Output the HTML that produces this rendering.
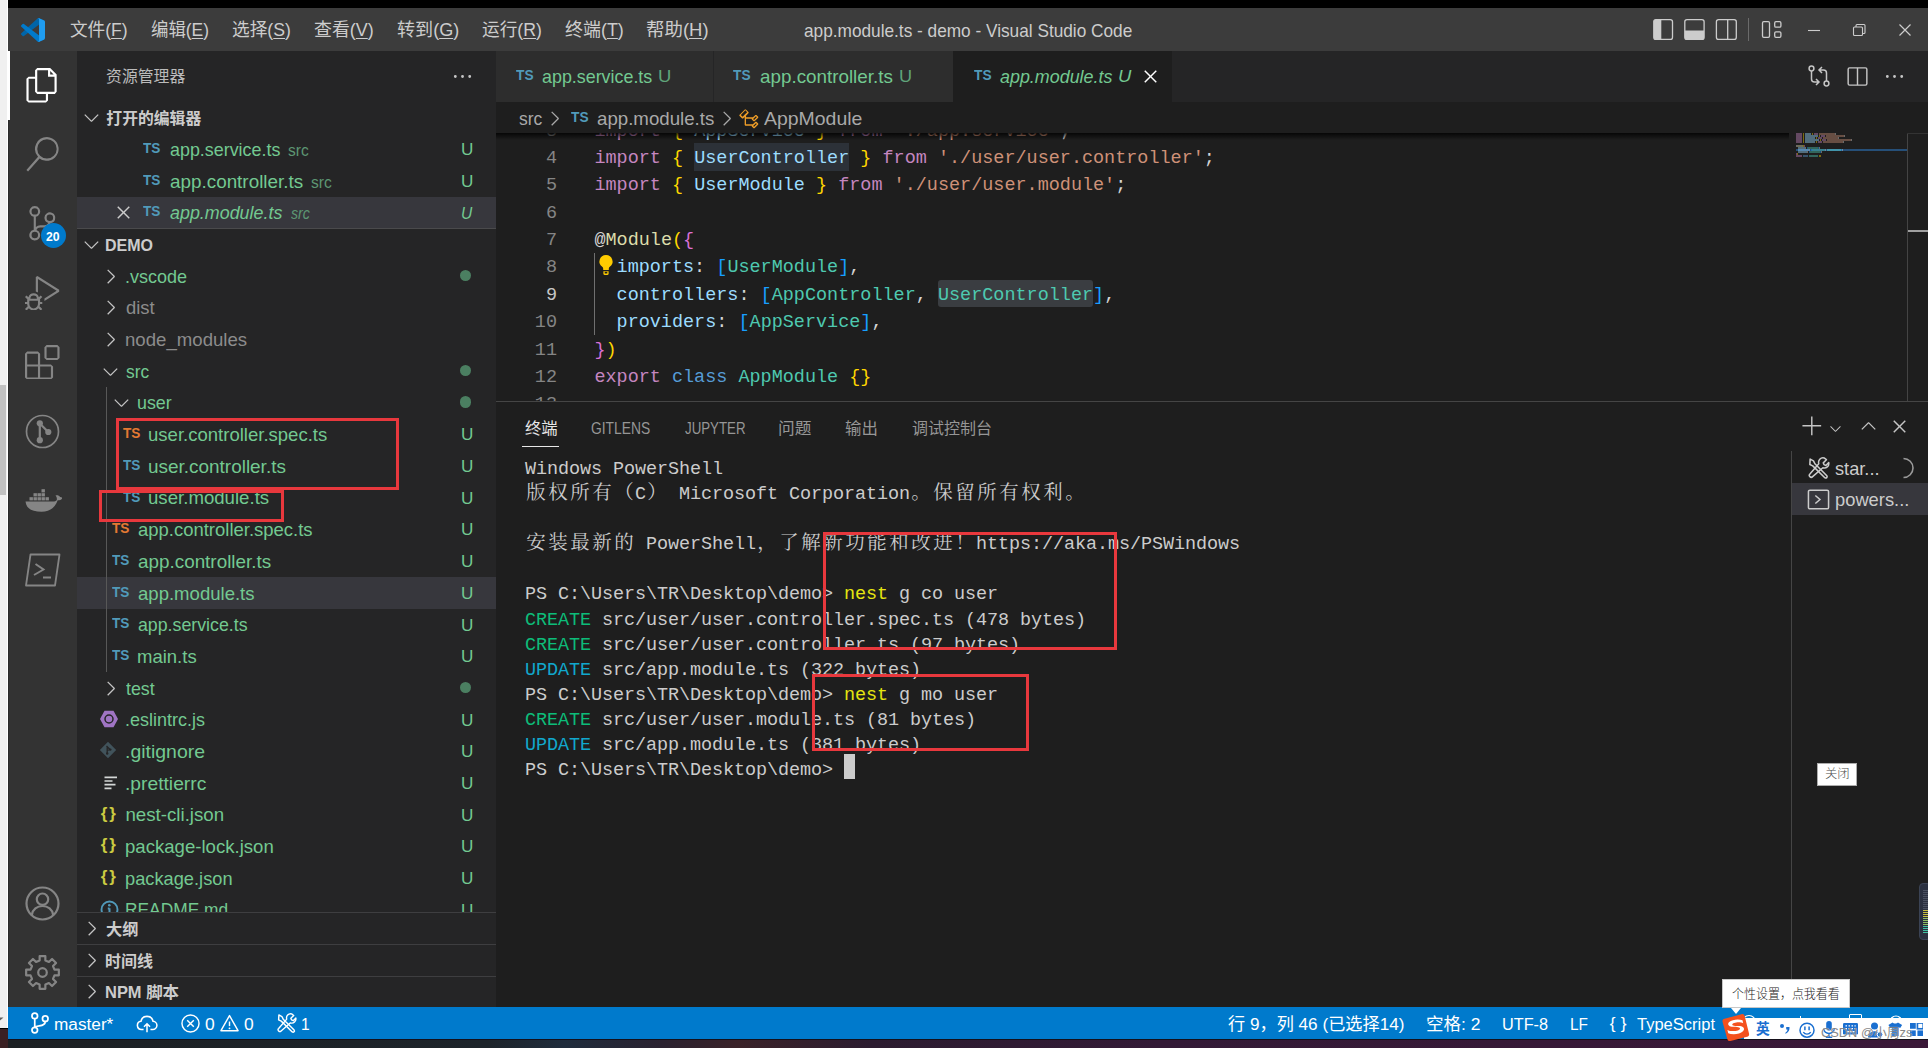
<!DOCTYPE html>
<html lang="zh-CN"><head><meta charset="utf-8"><title>app.module.ts - demo - Visual Studio Code</title>
<style>
html,body{margin:0;padding:0;width:1928px;height:1048px;overflow:hidden;background:#1e1e1e}
body{position:relative;font-family:"Liberation Sans","Noto Sans CJK SC",sans-serif;font-size:18.72px;color:#ccc;-webkit-font-smoothing:antialiased}
div,span,svg{position:absolute;box-sizing:border-box}
.t{white-space:pre;line-height:1;transform-origin:0 50%}
.t span,.t u,.t i,.t b{position:static}
.m{font-family:"Liberation Mono","Noto Serif CJK SC",monospace}
u{text-decoration:underline;text-underline-offset:2px}
</style></head>
<body>
<!-- p_title -->
<div style="left:0px;top:0px;width:8px;height:1048px;background:#f0f0f0;"></div>
<div style="left:0px;top:385px;width:6px;height:110px;background:#c1c1c1;"></div>
<div style="left:7px;top:0px;width:1px;height:1028px;background:#ffffff;"></div>
<div style="left:0px;top:1027.5px;width:8px;height:21px;background:#3a2023;"></div>
<div style="left:0px;top:1027.5px;width:8px;height:1px;background:#000000;"></div>
<svg style="left:0px;top:1016.5px;" width="4" height="4" viewBox="0 0 4 4"><path d="M0 .5h3.500L0 3.500z" fill="#606060"/></svg>
<div style="left:8px;top:0px;width:1920px;height:8px;background:#000;"></div>
<div style="left:8px;top:1039px;width:1920px;height:9px;background:linear-gradient(90deg,#1c2023 0%,#1d242a 25%,#1f2c3c 29%,#2a2230 34%,#3a2228 38%,#2c1c30 45%,#331a36 60%,#3a1838 100%);"></div>
<div style="left:8px;top:1039px;width:1920px;height:1px;background:#15101a;"></div>
<div style="left:8px;top:8px;width:1920px;height:43px;background:#3c3c3c;"></div>
<svg style="left:21px;top:17.5px;" width="24" height="24" viewBox="0 0 100 100"><path d="M96.5 10.8 75.9 0.9a6.2 6.2 0 0 0-7.1 1.2L1.4 63.6a4.2 4.2 0 0 0 0 6.2l5.5 5a4.2 4.2 0 0 0 5.3.2L93.4 13.4c2.7-2.1 6.6-.1 6.6 3.300v-.2a6.300 6.300 0 0 0-3.500-5.700z" fill="#0065a9"/><path d="M96.500 89.200 75.900 99.100a6.200 6.200 0 0 1-7.100-1.200L1.400 36.400a4.200 4.200 0 0 1 0-6.200l5.500-5a4.200 4.200 0 0 1 5.300-.2L93.400 86.600c2.700 2.100 6.600.1 6.600-3.300v.2a6.300 6.300 0 0 1-3.500 5.700z" fill="#007acc"/><path d="M75.900 99.100a6.200 6.200 0 0 1-7.100-1.200c2.300 2.300 6.200.700 6.200-2.600V4.700c0-3.300-3.900-4.900-6.200-2.600a6.200 6.200 0 0 1 7.100-1.200l20.600 9.900a6.200 6.200 0 0 1 3.500 5.600v67.200a6.200 6.200 0 0 1-3.500 5.600z" fill="#1f9cf0"/></svg>
<div class="t" style="left:70.0px;top:19.47px;height:22.46px;line-height:22.46px;font-size:18.72px;color:#cccccc;transform:scaleX(0.9417);">文件(<u>F</u>)</div>
<div class="t" style="left:151.0px;top:19.47px;height:22.46px;line-height:22.46px;font-size:18.72px;color:#cccccc;transform:scaleX(0.9306);">编辑(<u>E</u>)</div>
<div class="t" style="left:231.8px;top:19.47px;height:22.46px;line-height:22.46px;font-size:18.72px;color:#cccccc;transform:scaleX(0.9451);">选择(<u>S</u>)</div>
<div class="t" style="left:314.0px;top:19.47px;height:22.46px;line-height:22.46px;font-size:18.72px;color:#cccccc;transform:scaleX(0.958);">查看(<u>V</u>)</div>
<div class="t" style="left:396.8px;top:19.47px;height:22.46px;line-height:22.46px;font-size:18.72px;color:#cccccc;transform:scaleX(0.966);">转到(<u>G</u>)</div>
<div class="t" style="left:481.7px;top:19.47px;height:22.46px;line-height:22.46px;font-size:18.72px;color:#cccccc;transform:scaleX(0.9455);">运行(<u>R</u>)</div>
<div class="t" style="left:564.6px;top:19.47px;height:22.46px;line-height:22.46px;font-size:18.72px;color:#cccccc;transform:scaleX(0.9597);">终端(<u>T</u>)</div>
<div class="t" style="left:646.0px;top:19.47px;height:22.46px;line-height:22.46px;font-size:18.72px;color:#cccccc;transform:scaleX(0.9867);">帮助(<u>H</u>)</div>
<div class="t" style="left:803.5px;top:19.97px;height:22.46px;line-height:22.46px;font-size:18.72px;color:#cccccc;transform:scaleX(0.9214);">app.module.ts - demo - Visual Studio Code</div>
<svg style="left:0;top:0" width="1928" height="52" viewBox="0 0 1928 52"><rect x="1653.8" y="19.6" width="18.7" height="19.8" rx="2.200" fill="none" stroke="#cccccc" stroke-width="1.300"/><path d="M1653.800 21.200a1.600 1.600 0 0 1 1.600-1.600h5.900v19.800h-5.900a1.600 1.600 0 0 1-1.600-1.600z" fill="#cccccc"/><rect x="1684.8" y="19.6" width="19.3" height="19.8" rx="2.200" fill="none" stroke="#cccccc" stroke-width="1.300"/><path d="M1684.800 30.500h19.300v7.300a1.600 1.600 0 0 1-1.600 1.600h-16.100a1.600 1.600 0 0 1-1.600-1.600z" fill="#cccccc"/><rect x="1716.3999999999999" y="19.6" width="19.9" height="19.8" rx="2.200" fill="none" stroke="#cccccc" stroke-width="1.300"/><path d="M1727.700 19.500v20" stroke="#cccccc" stroke-width="1.300"/><rect x="1762.500" y="21.600" width="7" height="15.800" rx="1.300" fill="none" stroke="#cccccc" stroke-width="1.300"/><rect x="1774.700" y="21.600" width="6.200" height="5.600" rx="1.300" fill="none" stroke="#cccccc" stroke-width="1.300"/><rect x="1774.700" y="31.800" width="6.200" height="5.600" rx="1.300" fill="none" stroke="#cccccc" stroke-width="1.300"/></svg>
<div style="left:1748.3px;top:17.8px;width:1px;height:23.2px;background:#6b6b6b;"></div>
<svg style="left:1806px;top:23px;" width="16" height="16" viewBox="0 0 16 16"><path d="M2 7.500h12" stroke="#cccccc" stroke-width="1.100"/></svg>
<svg style="left:1851px;top:22px;" width="16" height="16" viewBox="0 0 16 16"><rect x="2.500" y="5" width="9" height="8.500" rx="1" fill="none" stroke="#cccccc" stroke-width="1.100"/><path d="M5 5V3.500a1 1 0 0 1 1-1h7a1 1 0 0 1 1 1v7a1 1 0 0 1-1 1h-1.500" fill="none" stroke="#cccccc" stroke-width="1.100"/></svg>
<svg style="left:1897px;top:22px;" width="16" height="16" viewBox="0 0 16 16"><path d="M2.500 2.500l11 11M13.500 2.500l-11 11" stroke="#cccccc" stroke-width="1.200"/></svg>
<!-- p_activity -->
<div style="left:8px;top:51px;width:69px;height:956px;background:#333333;"></div>
<div style="left:8px;top:51px;width:1px;height:956px;background:#2a2a2a;"></div>
<div style="left:8px;top:51px;width:2.3px;height:69px;background:#ffffff;"></div>
<svg style="left:25.22px;top:68.22px;" width="34.56" height="34.56" viewBox="0 0 24 24"><path d="M17.5 0h-9L7 1.5V6H2.5L1 7.5v15.07L2.5 24h12.07L16 22.570V18h4.700l1.300-1.430V4.500L17.500 0zm0 2.120l2.380 2.380H17.500V2.120zm-3 20.380h-12v-15H7v9.070L8.500 18h6v4.500zm6-6h-12v-15H16V6h4.500v10.500z" fill="#ffffff"/></svg>
<svg style="left:25.22px;top:137.32px;" width="34.56" height="34.56" viewBox="0 0 24 24"><path d="M15.250 0a8.250 8.250 0 0 0-6.180 13.720L1 22.880l1.120 1.120 8.050-9.120A8.251 8.251 0 1 0 15.250.010V0zm0 15a6.750 6.750 0 1 1 0-13.500 6.750 6.750 0 0 1 0 13.500z" fill="#858585"/></svg>
<svg style="left:25.22px;top:206.42px;" width="34.56" height="34.56" viewBox="0 0 24 24"><path d="M21.007 8.222A3.738 3.738 0 0 0 15.045 5.200a3.737 3.737 0 0 0 1.156 6.583 2.988 2.988 0 0 1-2.668 1.670h-2.990a4.456 4.456 0 0 0-2.989 1.165V7.400a3.737 3.737 0 1 0-1.494 0v9.117a3.776 3.776 0 1 0 1.816.099 2.990 2.990 0 0 1 2.668-1.667h2.990a4.484 4.484 0 0 0 4.223-3.039 3.736 3.736 0 0 0 3.250-3.687zM4.565 3.738a2.242 2.242 0 1 1 4.484 0 2.242 2.242 0 0 1-4.484 0zm4.484 16.441a2.242 2.242 0 1 1-4.484 0 2.242 2.242 0 0 1 4.484 0zm8.221-9.715a2.242 2.242 0 1 1 0-4.485 2.242 2.242 0 0 1 0 4.485z" fill="#858585"/></svg>
<div style="left:40.5px;top:223px;width:25px;height:25px;background:#007acc;border-radius:13px;"></div>
<div class="t" style="left:46.2px;top:228.5px;height:15.6px;line-height:15.6px;font-size:13px;color:#ffffff;font-weight:bold;transform:scaleX(0.9417);">20</div>
<svg style="left:25.22px;top:275.52px;" width="34.56" height="34.56" viewBox="0 0 24 24"><path d="M10.940 13.500l-1.320 1.320a3.730 3.730 0 0 0-7.240 0L1.060 13.500 0 14.560l1.720 1.720-.220.220V18H0v1.500h1.500v.080c.077.489.214.966.410 1.420L0 22.940 1.060 24l1.650-1.650A4.308 4.308 0 0 0 6 24a4.310 4.310 0 0 0 3.290-1.650L10.940 24 12 22.940 10.090 21c.198-.464.336-.951.410-1.450v-.100H12V18h-1.500v-1.500l-.220-.220L12 14.560l-1.060-1.060zM6 13.500a2.250 2.250 0 0 1 2.250 2.250h-4.500A2.250 2.250 0 0 1 6 13.500zm3 6a3.330 3.330 0 0 1-3 3 3.330 3.330 0 0 1-3-3v-2.250h6v2.250zm14.760-9.900v1.260L13.500 17.370V15.600l8.500-5.370L9 2v9.460a5.070 5.070 0 0 0-1.500-.720V.630L8.640 0l15.120 9.600z" fill="#858585"/></svg>
<svg style="left:25.22px;top:344.72px;" width="34.56" height="34.56" viewBox="0 0 24 24"><path d="M13.500 1.500L15 0h7.500L24 1.500V9l-1.500 1.500H15L13.500 9V1.500zm1.500 0V9h7.500V1.500H15zM0 15V6l1.500-1.500H9L10.500 6v7.500H18l1.500 1.500v7.500L18 24H1.500L0 22.500V15zm9-1.500V6H1.500v7.500H9zM9 15H1.500v7.500H9V15zm1.500 7.500H18V15h-7.500v7.500z" fill="#858585"/></svg>
<svg style="left:25px;top:414px;" width="35" height="35" viewBox="0 0 35 35"><circle cx="17.500" cy="17.500" r="16" fill="none" stroke="#858585" stroke-width="1.700"/><path d="M14.800 9.500V26M14.800 9.500L23 17.800" stroke="#858585" stroke-width="2.200" fill="none"/><circle cx="14.800" cy="9.300" r="3.100" fill="#858585"/><circle cx="23.300" cy="18" r="3.100" fill="#858585"/><circle cx="14.800" cy="26.200" r="3.100" fill="#858585"/></svg>
<svg style="left:24px;top:485.5px;" width="38" height="32" viewBox="0 0 38 32"><path d="M1.500 15.500h27.500c1.500 0 3-.6 3.800-1.600.3-1.800-.2-3.300-1.300-4.400 1.700-.6 3.600-.1 4.600 1.400 1.100.1 1.800.5 2.400 1.100-1 1.700-2.800 2.400-4.800 2.300C31.400 21.300 26 25.800 17.500 25.800 8 25.800 2.200 22.500 1.500 15.500z" fill="#858585"/><rect x="5.5" y="11.2" width="3.400" height="3.200" fill="#858585"/><rect x="9.5" y="11.2" width="3.400" height="3.200" fill="#858585"/><rect x="13.5" y="11.2" width="3.400" height="3.200" fill="#858585"/><rect x="17.5" y="11.2" width="3.400" height="3.200" fill="#858585"/><rect x="21.5" y="11.2" width="3.400" height="3.200" fill="#858585"/><rect x="9.5" y="7.2" width="3.400" height="3.200" fill="#858585"/><rect x="13.5" y="7.2" width="3.400" height="3.200" fill="#858585"/><rect x="17.5" y="7.2" width="3.400" height="3.200" fill="#858585"/><rect x="17.5" y="3.2" width="3.400" height="3.200" fill="#858585"/></svg>
<svg style="left:24px;top:552px;" width="38" height="36" viewBox="0 0 38 36"><path d="M6.500 2.500h29l-4.500 31h-29z" fill="none" stroke="#858585" stroke-width="1.800" stroke-linejoin="round"/><path d="M11.500 12l8 5.500-9.500 5.500M19 25.500h8" fill="none" stroke="#858585" stroke-width="2"/></svg>
<svg style="left:25px;top:885.5px;" width="35" height="35" viewBox="0 0 35 35"><circle cx="17.500" cy="17.500" r="16" fill="none" stroke="#858585" stroke-width="2.200"/><circle cx="17.500" cy="13.200" r="5.700" fill="none" stroke="#858585" stroke-width="2.200"/><path d="M6.800 29c.8-5.500 5.200-9 10.700-9s9.900 3.500 10.700 9" fill="none" stroke="#858585" stroke-width="2.200"/></svg>
<svg style="left:25px;top:954.5px;" width="35" height="35" viewBox="0 0 35 35"><path d="M14.65 1.15 L20.35 1.15 L20.37 5.54 L23.93 7.01 L27.05 3.92 L31.08 7.95 L27.99 11.07 L29.46 14.63 L33.85 14.65 L33.85 20.35 L29.46 20.37 L27.99 23.93 L31.08 27.05 L27.05 31.08 L23.93 27.99 L20.37 29.46 L20.35 33.85 L14.65 33.85 L14.63 29.46 L11.07 27.99 L7.95 31.08 L3.92 27.05 L7.01 23.93 L5.54 20.37 L1.15 20.35 L1.15 14.65 L5.54 14.63 L7.01 11.07 L3.92 7.95 L7.95 3.92 L11.07 7.01 L14.63 5.54Z" fill="none" stroke="#858585" stroke-width="2.200" stroke-linejoin="round"/><circle cx="17.500" cy="17.500" r="4.300" fill="none" stroke="#858585" stroke-width="2.200"/></svg>
<!-- p_sidebar -->
<div style="left:77px;top:51px;width:419px;height:956px;background:#252526;"></div>
<div class="t" style="left:106.1px;top:67.4px;height:19.01px;line-height:19.01px;font-size:15.84px;color:#bbbbbb;">资源管理器</div>
<svg style="left:451.48px;top:64.98px;" width="23.04" height="23.04" viewBox="0 0 16 16"><path d="M4 8a1 1 0 1 1-2 0 1 1 0 0 1 2 0zm5 0a1 1 0 1 1-2 0 1 1 0 0 1 2 0zm5 0a1 1 0 1 1-2 0 1 1 0 0 1 2 0z" fill="#c5c5c5"/></svg>
<svg style="left:80.18px;top:106.32px;" width="23.04" height="23.04" viewBox="0 0 16 16"><path d="M7.976 10.072l4.357-4.357.620.618L8.284 11h-.618L3 6.333l.619-.618 4.357 4.357z" fill="#c5c5c5"/></svg>
<div class="t" style="left:106.3px;top:109.34px;height:19.01px;line-height:19.01px;font-size:15.84px;color:#cccccc;font-weight:bold;">打开的编辑器</div>
<div class="t" style="left:143.0px;top:139.02px;height:18.0px;line-height:18.0px;font-size:15px;color:#519aba;font-weight:bold;transform:scaleX(0.908);">TS</div>
<div class="t" style="left:169.5px;top:138.99px;height:22.46px;line-height:22.46px;font-size:18.72px;color:#73c991;transform:scaleX(0.9562);">app.service.ts</div>
<div class="t" style="left:288.2px;top:140.91px;height:20.22px;line-height:20.22px;font-size:16.85px;color:#5d9673;transform:scaleX(0.9214);">src</div>
<div class="t" style="left:460.86px;top:140.32px;height:19.8px;line-height:19.8px;font-size:16.5px;color:#73c991;transform:scaleX(1.04);">U</div>
<div class="t" style="left:143.0px;top:170.7px;height:18.0px;line-height:18.0px;font-size:15px;color:#519aba;font-weight:bold;transform:scaleX(0.908);">TS</div>
<div class="t" style="left:169.5px;top:170.67px;height:22.46px;line-height:22.46px;font-size:18.72px;color:#73c991;transform:scaleX(1.0085);">app.controller.ts</div>
<div class="t" style="left:311.2px;top:172.59px;height:20.22px;line-height:20.22px;font-size:16.85px;color:#5d9673;transform:scaleX(0.926);">src</div>
<div class="t" style="left:460.86px;top:172.0px;height:19.8px;line-height:19.8px;font-size:16.5px;color:#73c991;transform:scaleX(1.04);">U</div>
<div style="left:77px;top:197.04px;width:419px;height:31.68px;background:#37373d;"></div>
<svg style="left:111.88px;top:201.36px;" width="23.04" height="23.04" viewBox="0 0 16 16"><path d="M8 8.707l3.646 3.647.708-.707L8.707 8l3.647-3.646-.707-.708L8 7.293 4.354 3.646l-.707.708L7.293 8l-3.646 3.646.707.708L8 8.707z" fill="#cccccc"/></svg>
<div class="t" style="left:143.0px;top:202.38px;height:18.0px;line-height:18.0px;font-size:15px;color:#519aba;font-weight:bold;transform:scaleX(0.908);">TS</div>
<div class="t" style="left:169.5px;top:202.35px;height:22.46px;line-height:22.46px;font-size:18.72px;color:#73c991;font-style:italic;transform:scaleX(0.9561);">app.module.ts</div>
<div class="t" style="left:290.6px;top:204.27px;height:20.22px;line-height:20.22px;font-size:16.85px;color:#5d9673;font-style:italic;transform:scaleX(0.8423);">src</div>
<div class="t" style="left:460.95px;top:203.68px;height:19.8px;line-height:19.8px;font-size:16.5px;color:#73c991;font-style:italic;transform:scaleX(0.9455);">U</div>
<div style="left:77px;top:228.2px;width:419px;height:1px;background:#4a4a4c;"></div>
<svg style="left:80.18px;top:233.04px;" width="23.04" height="23.04" viewBox="0 0 16 16"><path d="M7.976 10.072l4.357-4.357.620.618L8.284 11h-.618L3 6.333l.619-.618 4.357 4.357z" fill="#c5c5c5"/></svg>
<div class="t" style="left:105.29px;top:236.06px;height:19.01px;line-height:19.01px;font-size:15.84px;color:#cccccc;font-weight:bold;transform:scaleX(1.0114);">DEMO</div>
<div style="left:77px;top:260px;width:419px;height:652.6px;overflow:hidden;"><div style="left:-77px;top:-260px;width:1928px;height:1048px"><div style="left:77px;top:577.2px;width:419px;height:31.68px;background:#37373d;"></div><div style="left:106px;top:387px;width:1px;height:285px;background:#585858;"></div><svg style="left:98.68px;top:264.72px;" width="23.04" height="23.04" viewBox="0 0 16 16"><path d="M10.072 8.024L5.715 3.667l.618-.620L11 7.716v.618L6.333 13l-.618-.619 4.357-4.357z" fill="#c5c5c5"/></svg><div class="t" style="left:125.44px;top:265.71px;height:22.46px;line-height:22.46px;font-size:18.72px;color:#73c991;transform:scaleX(0.9642);">.vscode</div><div style="left:460px;top:269.74px;width:11.4px;height:11.4px;background:#4b7f61;border-radius:6px;"></div><svg style="left:98.68px;top:296.4px;" width="23.04" height="23.04" viewBox="0 0 16 16"><path d="M10.072 8.024L5.715 3.667l.618-.620L11 7.716v.618L6.333 13l-.618-.619 4.357-4.357z" fill="#c5c5c5"/></svg><div class="t" style="left:126.4px;top:297.39px;height:22.46px;line-height:22.46px;font-size:18.72px;color:#8c8c8c;transform:scaleX(0.9863);">dist</div><svg style="left:98.68px;top:328.08px;" width="23.04" height="23.04" viewBox="0 0 16 16"><path d="M10.072 8.024L5.715 3.667l.618-.620L11 7.716v.618L6.333 13l-.618-.619 4.357-4.357z" fill="#c5c5c5"/></svg><div class="t" style="left:125.4px;top:329.07px;height:22.46px;line-height:22.46px;font-size:18.72px;color:#8c8c8c;transform:scaleX(0.9955);">node_modules</div><svg style="left:98.68px;top:359.76px;" width="23.04" height="23.04" viewBox="0 0 16 16"><path d="M7.976 10.072l4.357-4.357.620.618L8.284 11h-.618L3 6.333l.619-.618 4.357 4.357z" fill="#c5c5c5"/></svg><div class="t" style="left:126.4px;top:360.75px;height:22.46px;line-height:22.46px;font-size:18.72px;color:#73c991;transform:scaleX(0.9276);">src</div><div style="left:460px;top:364.78px;width:11.4px;height:11.4px;background:#4b7f61;border-radius:6px;"></div><svg style="left:110.28px;top:391.44px;" width="23.04" height="23.04" viewBox="0 0 16 16"><path d="M7.976 10.072l4.357-4.357.620.618L8.284 11h-.618L3 6.333l.619-.618 4.357 4.357z" fill="#c5c5c5"/></svg><div class="t" style="left:137.05px;top:392.43px;height:22.46px;line-height:22.46px;font-size:18.72px;color:#73c991;transform:scaleX(0.9529);">user</div><div style="left:460px;top:396.46px;width:11.4px;height:11.4px;background:#4b7f61;border-radius:6px;"></div><div class="t" style="left:123.1px;top:424.14px;height:18.0px;line-height:18.0px;font-size:15px;color:#e37933;font-weight:bold;transform:scaleX(0.908);">TS</div><div class="t" style="left:148.21px;top:424.11px;height:22.46px;line-height:22.46px;font-size:18.72px;color:#73c991;transform:scaleX(0.9909);">user.controller.spec.ts</div><div class="t" style="left:460.86px;top:425.44px;height:19.8px;line-height:19.8px;font-size:16.5px;color:#73c991;transform:scaleX(1.04);">U</div><div class="t" style="left:123.1px;top:455.82px;height:18.0px;line-height:18.0px;font-size:15px;color:#519aba;font-weight:bold;transform:scaleX(0.908);">TS</div><div class="t" style="left:148.19px;top:455.79px;height:22.46px;line-height:22.46px;font-size:18.72px;color:#73c991;transform:scaleX(1.0124);">user.controller.ts</div><div class="t" style="left:460.86px;top:457.12px;height:19.8px;line-height:19.8px;font-size:16.5px;color:#73c991;transform:scaleX(1.04);">U</div><div class="t" style="left:123.1px;top:487.5px;height:18.0px;line-height:18.0px;font-size:15px;color:#519aba;font-weight:bold;transform:scaleX(0.908);">TS</div><div class="t" style="left:148.2px;top:487.47px;height:22.46px;line-height:22.46px;font-size:18.72px;color:#73c991;transform:scaleX(0.996);">user.module.ts</div><div class="t" style="left:460.86px;top:488.8px;height:19.8px;line-height:19.8px;font-size:16.5px;color:#73c991;transform:scaleX(1.04);">U</div><div class="t" style="left:111.5px;top:519.18px;height:18.0px;line-height:18.0px;font-size:15px;color:#e37933;font-weight:bold;transform:scaleX(0.908);">TS</div><div class="t" style="left:138.0px;top:519.15px;height:22.46px;line-height:22.46px;font-size:18.72px;color:#73c991;transform:scaleX(0.9876);">app.controller.spec.ts</div><div class="t" style="left:460.86px;top:520.48px;height:19.8px;line-height:19.8px;font-size:16.5px;color:#73c991;transform:scaleX(1.04);">U</div><div class="t" style="left:111.5px;top:550.86px;height:18.0px;line-height:18.0px;font-size:15px;color:#519aba;font-weight:bold;transform:scaleX(0.908);">TS</div><div class="t" style="left:138.0px;top:550.83px;height:22.46px;line-height:22.46px;font-size:18.72px;color:#73c991;transform:scaleX(1.0085);">app.controller.ts</div><div class="t" style="left:460.86px;top:552.16px;height:19.8px;line-height:19.8px;font-size:16.5px;color:#73c991;transform:scaleX(1.04);">U</div><div class="t" style="left:111.5px;top:582.54px;height:18.0px;line-height:18.0px;font-size:15px;color:#519aba;font-weight:bold;transform:scaleX(0.908);">TS</div><div class="t" style="left:138.0px;top:582.51px;height:22.46px;line-height:22.46px;font-size:18.72px;color:#73c991;transform:scaleX(0.992);">app.module.ts</div><div class="t" style="left:460.86px;top:583.84px;height:19.8px;line-height:19.8px;font-size:16.5px;color:#73c991;transform:scaleX(1.04);">U</div><div class="t" style="left:111.5px;top:614.22px;height:18.0px;line-height:18.0px;font-size:15px;color:#519aba;font-weight:bold;transform:scaleX(0.908);">TS</div><div class="t" style="left:138.0px;top:614.19px;height:22.46px;line-height:22.46px;font-size:18.72px;color:#73c991;transform:scaleX(0.9493);">app.service.ts</div><div class="t" style="left:460.86px;top:615.52px;height:19.8px;line-height:19.8px;font-size:16.5px;color:#73c991;transform:scaleX(1.04);">U</div><div class="t" style="left:111.5px;top:645.9px;height:18.0px;line-height:18.0px;font-size:15px;color:#519aba;font-weight:bold;transform:scaleX(0.908);">TS</div><div class="t" style="left:137.01px;top:645.87px;height:22.46px;line-height:22.46px;font-size:18.72px;color:#73c991;transform:scaleX(0.9893);">main.ts</div><div class="t" style="left:460.86px;top:647.2px;height:19.8px;line-height:19.8px;font-size:16.5px;color:#73c991;transform:scaleX(1.04);">U</div><svg style="left:98.68px;top:676.56px;" width="23.04" height="23.04" viewBox="0 0 16 16"><path d="M10.072 8.024L5.715 3.667l.618-.620L11 7.716v.618L6.333 13l-.618-.619 4.357-4.357z" fill="#c5c5c5"/></svg><div class="t" style="left:126.4px;top:677.55px;height:22.46px;line-height:22.46px;font-size:18.72px;color:#73c991;transform:scaleX(0.9532);">test</div><div style="left:460px;top:681.58px;width:11.4px;height:11.4px;background:#4b7f61;border-radius:6px;"></div><svg style="left:98.6px;top:709.26px;" width="20" height="20" viewBox="0 0 20 20"><path d="M5.500 1.800h9L19 10l-4.500 8.200h-9L1 10z" fill="#a074c4"/><circle cx="10" cy="10" r="4" fill="#a074c4" stroke="#252526" stroke-width="1.500"/></svg><div class="t" style="left:125.44px;top:709.23px;height:22.46px;line-height:22.46px;font-size:18.72px;color:#73c991;transform:scaleX(0.961);">.eslintrc.js</div><div class="t" style="left:460.86px;top:710.56px;height:19.8px;line-height:19.8px;font-size:16.5px;color:#73c991;transform:scaleX(1.04);">U</div><svg style="left:99px;top:741.44px;" width="18" height="18" viewBox="0 0 18 18"><path d="M9 .8 17.200 9 9 17.200.8 9z" fill="#41535b"/><path d="M7.500 5l3.500 3.500M8.200 6v7M8.200 9.500l3-1" stroke="#252526" stroke-width="1.300" fill="none"/><circle cx="8.200" cy="12.500" r="1.200" fill="#252526"/><circle cx="11.300" cy="8.600" r="1.200" fill="#252526"/></svg><div class="t" style="left:125.36px;top:740.91px;height:22.46px;line-height:22.46px;font-size:18.72px;color:#73c991;transform:scaleX(1.0405);">.gitignore</div><div class="t" style="left:460.86px;top:742.24px;height:19.8px;line-height:19.8px;font-size:16.5px;color:#73c991;transform:scaleX(1.04);">U</div><svg style="left:104px;top:775.62px;" width="14" height="14" viewBox="0 0 14 14"><path d="M.5 1.300h12.500M.5 5h8M.5 8.700h11M.5 12.400h7" stroke="#d4d7d6" stroke-width="1.700" fill="none"/></svg><div class="t" style="left:125.37px;top:772.59px;height:22.46px;line-height:22.46px;font-size:18.72px;color:#73c991;transform:scaleX(1.0292);">.prettierrc</div><div class="t" style="left:460.86px;top:773.92px;height:19.8px;line-height:19.8px;font-size:16.5px;color:#73c991;transform:scaleX(1.04);">U</div><div class="t" style="left:100.8px;top:803.8px;height:20.4px;line-height:20.4px;font-size:17px;color:#cbcb41;font-weight:bold;letter-spacing:1.784px;">{}</div><div class="t" style="left:125.4px;top:804.27px;height:22.46px;line-height:22.46px;font-size:18.72px;color:#73c991;">nest-cli.json</div><div class="t" style="left:460.86px;top:805.6px;height:19.8px;line-height:19.8px;font-size:16.5px;color:#73c991;transform:scaleX(1.04);">U</div><div class="t" style="left:100.8px;top:835.48px;height:20.4px;line-height:20.4px;font-size:17px;color:#cbcb41;font-weight:bold;letter-spacing:1.784px;">{}</div><div class="t" style="left:125.41px;top:835.95px;height:22.46px;line-height:22.46px;font-size:18.72px;color:#73c991;transform:scaleX(0.9939);">package-lock.json</div><div class="t" style="left:460.86px;top:837.28px;height:19.8px;line-height:19.8px;font-size:16.5px;color:#73c991;transform:scaleX(1.04);">U</div><div class="t" style="left:100.8px;top:867.16px;height:20.4px;line-height:20.4px;font-size:17px;color:#cbcb41;font-weight:bold;letter-spacing:1.784px;">{}</div><div class="t" style="left:125.42px;top:867.63px;height:22.46px;line-height:22.46px;font-size:18.72px;color:#73c991;transform:scaleX(0.976);">package.json</div><div class="t" style="left:460.86px;top:868.96px;height:19.8px;line-height:19.8px;font-size:16.5px;color:#73c991;transform:scaleX(1.04);">U</div><svg style="left:99.5px;top:900.34px;" width="19" height="19" viewBox="0 0 19 19"><circle cx="9.500" cy="9.500" r="8" fill="none" stroke="#519aba" stroke-width="1.900"/><path d="M9.500 8.300v5.500M7.800 8.600h1.700M7.500 13.800h4" stroke="#519aba" stroke-width="2"/><circle cx="9.300" cy="5.300" r="1.300" fill="#519aba"/></svg><div class="t" style="left:125.47px;top:899.31px;height:22.46px;line-height:22.46px;font-size:18.72px;color:#73c991;transform:scaleX(0.9272);">README.md</div><div class="t" style="left:460.86px;top:900.64px;height:19.8px;line-height:19.8px;font-size:16.5px;color:#73c991;transform:scaleX(1.04);">U</div></div></div>
<div style="left:77px;top:911.9px;width:419px;height:1.6px;background:#3e3e40;"></div>
<svg style="left:80.48px;top:917.38px;" width="23.04" height="23.04" viewBox="0 0 16 16"><path d="M10.072 8.024L5.715 3.667l.618-.620L11 7.716v.618L6.333 13l-.618-.619 4.357-4.357z" fill="#c5c5c5"/></svg>
<div class="t" style="left:105.8px;top:920.4px;height:19.01px;line-height:19.01px;font-size:15.84px;color:#cccccc;font-weight:bold;transform:scaleX(1.025);">大纲</div>
<div style="left:77px;top:943.9px;width:419px;height:1.6px;background:#3e3e40;"></div>
<svg style="left:80.48px;top:948.88px;" width="23.04" height="23.04" viewBox="0 0 16 16"><path d="M10.072 8.024L5.715 3.667l.618-.620L11 7.716v.618L6.333 13l-.618-.619 4.357-4.357z" fill="#c5c5c5"/></svg>
<div class="t" style="left:104.79px;top:951.9px;height:19.01px;line-height:19.01px;font-size:15.84px;color:#cccccc;font-weight:bold;transform:scaleX(1.0117);">时间线</div>
<div style="left:77px;top:975.9px;width:419px;height:1.6px;background:#3e3e40;"></div>
<svg style="left:80.48px;top:980.38px;" width="23.04" height="23.04" viewBox="0 0 16 16"><path d="M10.072 8.024L5.715 3.667l.618-.620L11 7.716v.618L6.333 13l-.618-.619 4.357-4.357z" fill="#c5c5c5"/></svg>
<div class="t" style="left:104.76px;top:983.4px;height:19.01px;line-height:19.01px;font-size:15.84px;color:#cccccc;font-weight:bold;transform:scaleX(1.0398);">NPM 脚本</div>
<!-- p_editor -->
<div style="left:496px;top:51px;width:1432px;height:51px;background:#252526;"></div>
<div style="left:496px;top:51px;width:216.5px;height:51px;background:#2d2d2d;"></div>
<div style="left:713.5px;top:51px;width:239px;height:51px;background:#2d2d2d;"></div>
<div style="left:952.5px;top:51px;width:219px;height:51px;background:#1e1e1e;"></div>
<div class="t" style="left:516.0px;top:67.4px;height:16.8px;line-height:16.8px;font-size:14px;color:#519aba;font-weight:bold;transform:scaleX(0.98);">TS</div>
<div class="t" style="left:542.4px;top:65.77px;height:22.46px;line-height:22.46px;font-size:18.72px;color:#73c991;transform:scaleX(0.9554);">app.service.ts</div>
<div class="t" style="left:658.48px;top:67.4px;height:19.8px;line-height:19.8px;font-size:16.5px;color:#5fa47a;transform:scaleX(1.12);">U</div>
<div class="t" style="left:733.3px;top:67.4px;height:16.8px;line-height:16.8px;font-size:14px;color:#519aba;font-weight:bold;transform:scaleX(0.98);">TS</div>
<div class="t" style="left:759.6px;top:65.77px;height:22.46px;line-height:22.46px;font-size:18.72px;color:#73c991;transform:scaleX(1.0062);">app.controller.ts</div>
<div class="t" style="left:899.4px;top:67.4px;height:19.8px;line-height:19.8px;font-size:16.5px;color:#5fa47a;transform:scaleX(1.1);">U</div>
<div class="t" style="left:973.5px;top:67.4px;height:16.8px;line-height:16.8px;font-size:14px;color:#519aba;font-weight:bold;transform:scaleX(0.98);">TS</div>
<div class="t" style="left:999.8px;top:65.77px;height:22.46px;line-height:22.46px;font-size:18.72px;color:#73c991;font-style:italic;transform:scaleX(0.957);">app.module.ts</div>
<div class="t" style="left:1118.48px;top:67.4px;height:19.8px;line-height:19.8px;font-size:16.5px;color:#73c991;font-style:italic;transform:scaleX(1.12);">U</div>
<svg style="left:1139.48px;top:64.98px;" width="23.04" height="23.04" viewBox="0 0 16 16"><path d="M8 8.707l3.646 3.647.708-.707L8.707 8l3.647-3.646-.707-.708L8 7.293 4.354 3.646l-.707.708L7.293 8l-3.646 3.646.707.708L8 8.707z" fill="#ffffff"/></svg>
<svg style="left:1807px;top:64px;" width="24" height="24" viewBox="0 0 16 16"><circle cx="3" cy="3" r="1.600" fill="none" stroke="#c5c5c5" stroke-width="1"/><circle cx="13" cy="13" r="1.600" fill="none" stroke="#c5c5c5" stroke-width="1"/><path d="M3 4.600V10a2 2 0 0 0 2 2h2.500M6 10l2 2-2 2M13 11.400V6a2 2 0 0 0-2-2H8.500M10 2L8 4l2 2" fill="none" stroke="#c5c5c5" stroke-width="1"/></svg>
<svg style="left:1846px;top:65px;" width="23" height="23" viewBox="0 0 16 16"><rect x="1.500" y="2" width="13" height="12" rx="1" fill="none" stroke="#c5c5c5" stroke-width="1"/><path d="M8 2v12" stroke="#c5c5c5" stroke-width="1"/></svg>
<svg style="left:1882.98px;top:65.28px;" width="23.04" height="23.04" viewBox="0 0 16 16"><path d="M4 8a1 1 0 1 1-2 0 1 1 0 0 1 2 0zm5 0a1 1 0 1 1-2 0 1 1 0 0 1 2 0zm5 0a1 1 0 1 1-2 0 1 1 0 0 1 2 0z" fill="#c5c5c5"/></svg>
<div class="t" style="left:518.6px;top:107.77px;height:22.46px;line-height:22.46px;font-size:18.72px;color:#a9a9a9;transform:scaleX(0.9357);">src</div>
<svg style="left:542.98px;top:107.28px;" width="23.04" height="23.04" viewBox="0 0 16 16"><path d="M10.072 8.024L5.715 3.667l.618-.620L11 7.716v.618L6.333 13l-.618-.619 4.357-4.357z" fill="#a9a9a9"/></svg>
<div class="t" style="left:570.8px;top:109.4px;height:16.8px;line-height:16.8px;font-size:14px;color:#519aba;font-weight:bold;transform:scaleX(0.98);">TS</div>
<div class="t" style="left:597.1px;top:107.77px;height:22.46px;line-height:22.46px;font-size:18.72px;color:#a9a9a9;transform:scaleX(0.998);">app.module.ts</div>
<svg style="left:714.98px;top:107.28px;" width="23.04" height="23.04" viewBox="0 0 16 16"><path d="M10.072 8.024L5.715 3.667l.618-.620L11 7.716v.618L6.333 13l-.618-.619 4.357-4.357z" fill="#a9a9a9"/></svg>
<svg style="left:738px;top:107.5px;" width="22" height="22" viewBox="0 0 16 16"><path d="M11.340 9.710h.710l2.670-2.670v-.710L13.380 5h-.700l-1.820 1.810h-5V5.560l1.860-1.850V3l-2-2H5L1 5v.710l2 2h.710l1.140-1.150v5.790l.500.500H10v.520l1.330 1.340h.710l2.670-2.670v-.710L13.370 10h-.700l-1.860 1.850h-5v-4H10v.480l1.340 1.380zm1.690-3.650l.630.630-2 2-.630-.630 2-2zm-8.960-.460L3.350 6.310l-1.290-1.300 3.290-3.300 1.300 1.300-1.760 1.770-.820.820zm8.960 5.460l.630.630-2 2-.630-.630 2-2z" fill="#ee9d28"/></svg>
<div class="t" style="left:764.3px;top:107.77px;height:22.46px;line-height:22.46px;font-size:18.72px;color:#a9a9a9;transform:scaleX(1.0391);">AppModule</div>
<div style="left:496px;top:133px;width:1300px;height:268px;overflow:hidden;"><div style="left:-496px;top:-133px;width:1928px;height:1048px"><div style="left:694.12px;top:143.32px;width:155.12px;height:27.36px;background:#2c3138;"></div><div style="left:937.88px;top:280.12px;width:155.12px;height:27.36px;background:#3a3d41;border-radius:3px;"></div><div style="left:594px;top:252.76px;width:1.3px;height:82.08px;background:#707070;"></div><div class="t m" style="left:545.92px;top:120.66px;height:22.16px;line-height:22.16px;font-size:18.47px;color:#858585;letter-spacing:0.006px;">3</div><div class="t m" style="left:594.4px;top:120.66px;height:22.16px;line-height:22.16px;font-size:18.47px;color:#d4d4d4;letter-spacing:0.006px;"><span style="color:#c586c0">import</span><span style="color:#d4d4d4"> </span><span style="color:#ffd700">{</span><span style="color:#9cdcfe"> AppService </span><span style="color:#ffd700">}</span><span style="color:#c586c0"> from</span><span style="color:#ce9178"> './app.service'</span><span style="color:#d4d4d4">;</span></div><div class="t m" style="left:545.92px;top:148.02px;height:22.16px;line-height:22.16px;font-size:18.47px;color:#858585;letter-spacing:0.006px;">4</div><div class="t m" style="left:594.4px;top:148.02px;height:22.16px;line-height:22.16px;font-size:18.47px;color:#d4d4d4;letter-spacing:0.006px;"><span style="color:#c586c0">import</span><span style="color:#d4d4d4"> </span><span style="color:#ffd700">{</span><span style="color:#9cdcfe"> UserController </span><span style="color:#ffd700">}</span><span style="color:#c586c0"> from</span><span style="color:#ce9178"> './user/user.controller'</span><span style="color:#d4d4d4">;</span></div><div class="t m" style="left:545.92px;top:175.38px;height:22.16px;line-height:22.16px;font-size:18.47px;color:#858585;letter-spacing:0.006px;">5</div><div class="t m" style="left:594.4px;top:175.38px;height:22.16px;line-height:22.16px;font-size:18.47px;color:#d4d4d4;letter-spacing:0.006px;"><span style="color:#c586c0">import</span><span style="color:#d4d4d4"> </span><span style="color:#ffd700">{</span><span style="color:#9cdcfe"> UserModule </span><span style="color:#ffd700">}</span><span style="color:#c586c0"> from</span><span style="color:#ce9178"> './user/user.module'</span><span style="color:#d4d4d4">;</span></div><div class="t m" style="left:545.92px;top:202.74px;height:22.16px;line-height:22.16px;font-size:18.47px;color:#858585;letter-spacing:0.006px;">6</div><div class="t m" style="left:545.92px;top:230.1px;height:22.16px;line-height:22.16px;font-size:18.47px;color:#858585;letter-spacing:0.006px;">7</div><div class="t m" style="left:594.4px;top:230.1px;height:22.16px;line-height:22.16px;font-size:18.47px;color:#d4d4d4;letter-spacing:0.006px;"><span style="color:#d4d4d4">@</span><span style="color:#dcdcaa">Module</span><span style="color:#ffd700">(</span><span style="color:#da70d6">{</span></div><div class="t m" style="left:545.92px;top:257.46px;height:22.16px;line-height:22.16px;font-size:18.47px;color:#858585;letter-spacing:0.006px;">8</div><div class="t m" style="left:594.4px;top:257.46px;height:22.16px;line-height:22.16px;font-size:18.47px;color:#d4d4d4;letter-spacing:0.006px;"><span style="color:#9cdcfe">  imports</span><span style="color:#d4d4d4">: </span><span style="color:#179fff">[</span><span style="color:#4ec9b0">UserModule</span><span style="color:#179fff">]</span><span style="color:#d4d4d4">,</span></div><div class="t m" style="left:545.92px;top:284.82px;height:22.16px;line-height:22.16px;font-size:18.47px;color:#c6c6c6;letter-spacing:0.006px;">9</div><div class="t m" style="left:594.4px;top:284.82px;height:22.16px;line-height:22.16px;font-size:18.47px;color:#d4d4d4;letter-spacing:0.006px;"><span style="color:#9cdcfe">  controllers</span><span style="color:#d4d4d4">: </span><span style="color:#179fff">[</span><span style="color:#4ec9b0">AppController</span><span style="color:#d4d4d4">, </span><span style="color:#4ec9b0">UserController</span><span style="color:#179fff">]</span><span style="color:#d4d4d4">,</span></div><div class="t m" style="left:534.84px;top:312.18px;height:22.16px;line-height:22.16px;font-size:18.47px;color:#858585;letter-spacing:0.006px;">10</div><div class="t m" style="left:594.4px;top:312.18px;height:22.16px;line-height:22.16px;font-size:18.47px;color:#d4d4d4;letter-spacing:0.006px;"><span style="color:#9cdcfe">  providers</span><span style="color:#d4d4d4">: </span><span style="color:#179fff">[</span><span style="color:#4ec9b0">AppService</span><span style="color:#179fff">]</span><span style="color:#d4d4d4">,</span></div><div class="t m" style="left:534.84px;top:339.54px;height:22.16px;line-height:22.16px;font-size:18.47px;color:#858585;letter-spacing:0.006px;">11</div><div class="t m" style="left:594.4px;top:339.54px;height:22.16px;line-height:22.16px;font-size:18.47px;color:#d4d4d4;letter-spacing:0.006px;"><span style="color:#da70d6">}</span><span style="color:#ffd700">)</span></div><div class="t m" style="left:534.84px;top:366.9px;height:22.16px;line-height:22.16px;font-size:18.47px;color:#858585;letter-spacing:0.006px;">12</div><div class="t m" style="left:594.4px;top:366.9px;height:22.16px;line-height:22.16px;font-size:18.47px;color:#d4d4d4;letter-spacing:0.006px;"><span style="color:#c586c0">export</span><span style="color:#569cd6"> class</span><span style="color:#4ec9b0"> AppModule </span><span style="color:#ffd700">{}</span></div><div class="t m" style="left:534.84px;top:394.26px;height:22.16px;line-height:22.16px;font-size:18.47px;color:#858585;letter-spacing:0.006px;">13</div><svg style="left:597.5px;top:253.5px;" width="16" height="22" viewBox="0 0 16 22"><path d="M8 1a6.500 6.500 0 0 0-3.800 11.800c.600.500 1 1.100 1 1.900V16h5.600v-1.300c0-.8.400-1.400 1-1.900A6.500 6.500 0 0 0 8 1z" fill="#ffcc00"/><path d="M5.400 17.200h5.200v2.300a1.500 1.500 0 0 1-1.500 1.500H6.900a1.500 1.500 0 0 1-1.500-1.500z" fill="#ffcc00"/><rect x="6.700" y="17.800" width="2.600" height="1.700" fill="#1e1e1e"/></svg></div></div>
<div style="left:496px;top:133px;width:1293px;height:7px;background:linear-gradient(#000000cc,#00000000);"></div>
<div style="left:1796px;top:149px;width:111px;height:2px;background:#264f78;"></div>
<div style="left:1827px;top:149px;width:14px;height:2px;background:#3a6ea5;"></div>
<div style="left:1796px;top:133.2px;width:6px;height:1.6px;background:#c586c0;opacity:.42;"></div>
<div style="left:1803px;top:133.2px;width:1px;height:1.6px;background:#ffd700;opacity:.42;"></div>
<div style="left:1805px;top:133.2px;width:6px;height:1.6px;background:#9cdcfe;opacity:.42;"></div>
<div style="left:1812px;top:133.2px;width:1px;height:1.6px;background:#ffd700;opacity:.42;"></div>
<div style="left:1814px;top:133.2px;width:4px;height:1.6px;background:#c586c0;opacity:.42;"></div>
<div style="left:1819px;top:133.2px;width:16px;height:1.6px;background:#ce9178;opacity:.42;"></div>
<div style="left:1835px;top:133.2px;width:1px;height:1.6px;background:#d4d4d4;opacity:.42;"></div>
<div style="left:1796px;top:135.2px;width:6px;height:1.6px;background:#c586c0;opacity:.42;"></div>
<div style="left:1803px;top:135.2px;width:1px;height:1.6px;background:#ffd700;opacity:.42;"></div>
<div style="left:1805px;top:135.2px;width:13px;height:1.6px;background:#9cdcfe;opacity:.42;"></div>
<div style="left:1819px;top:135.2px;width:1px;height:1.6px;background:#ffd700;opacity:.42;"></div>
<div style="left:1821px;top:135.2px;width:4px;height:1.6px;background:#c586c0;opacity:.42;"></div>
<div style="left:1826px;top:135.2px;width:18px;height:1.6px;background:#ce9178;opacity:.42;"></div>
<div style="left:1844px;top:135.2px;width:1px;height:1.6px;background:#d4d4d4;opacity:.42;"></div>
<div style="left:1796px;top:137.2px;width:6px;height:1.6px;background:#c586c0;opacity:.42;"></div>
<div style="left:1803px;top:137.2px;width:1px;height:1.6px;background:#ffd700;opacity:.42;"></div>
<div style="left:1805px;top:137.2px;width:10px;height:1.6px;background:#9cdcfe;opacity:.42;"></div>
<div style="left:1816px;top:137.2px;width:1px;height:1.6px;background:#ffd700;opacity:.42;"></div>
<div style="left:1818px;top:137.2px;width:4px;height:1.6px;background:#c586c0;opacity:.42;"></div>
<div style="left:1823px;top:137.2px;width:15px;height:1.6px;background:#ce9178;opacity:.42;"></div>
<div style="left:1838px;top:137.2px;width:1px;height:1.6px;background:#d4d4d4;opacity:.42;"></div>
<div style="left:1796px;top:139.2px;width:6px;height:1.6px;background:#c586c0;opacity:.42;"></div>
<div style="left:1803px;top:139.2px;width:1px;height:1.6px;background:#ffd700;opacity:.42;"></div>
<div style="left:1805px;top:139.2px;width:14px;height:1.6px;background:#9cdcfe;opacity:.42;"></div>
<div style="left:1820px;top:139.2px;width:1px;height:1.6px;background:#ffd700;opacity:.42;"></div>
<div style="left:1822px;top:139.2px;width:4px;height:1.6px;background:#c586c0;opacity:.42;"></div>
<div style="left:1827px;top:139.2px;width:24px;height:1.6px;background:#ce9178;opacity:.42;"></div>
<div style="left:1851px;top:139.2px;width:1px;height:1.6px;background:#d4d4d4;opacity:.42;"></div>
<div style="left:1796px;top:141.2px;width:6px;height:1.6px;background:#c586c0;opacity:.42;"></div>
<div style="left:1803px;top:141.2px;width:1px;height:1.6px;background:#ffd700;opacity:.42;"></div>
<div style="left:1805px;top:141.2px;width:10px;height:1.6px;background:#9cdcfe;opacity:.42;"></div>
<div style="left:1816px;top:141.2px;width:1px;height:1.6px;background:#ffd700;opacity:.42;"></div>
<div style="left:1818px;top:141.2px;width:4px;height:1.6px;background:#c586c0;opacity:.42;"></div>
<div style="left:1823px;top:141.2px;width:20px;height:1.6px;background:#ce9178;opacity:.42;"></div>
<div style="left:1843px;top:141.2px;width:1px;height:1.6px;background:#d4d4d4;opacity:.42;"></div>
<div style="left:1796px;top:145.2px;width:1px;height:1.6px;background:#d4d4d4;opacity:.42;"></div>
<div style="left:1797px;top:145.2px;width:6px;height:1.6px;background:#dcdcaa;opacity:.42;"></div>
<div style="left:1803px;top:145.2px;width:1px;height:1.6px;background:#ffd700;opacity:.42;"></div>
<div style="left:1804px;top:145.2px;width:1px;height:1.6px;background:#da70d6;opacity:.42;"></div>
<div style="left:1798px;top:147.2px;width:7px;height:1.6px;background:#9cdcfe;opacity:.42;"></div>
<div style="left:1805px;top:147.2px;width:1px;height:1.6px;background:#d4d4d4;opacity:.42;"></div>
<div style="left:1807px;top:147.2px;width:1px;height:1.6px;background:#179fff;opacity:.42;"></div>
<div style="left:1808px;top:147.2px;width:10px;height:1.6px;background:#4ec9b0;opacity:.42;"></div>
<div style="left:1818px;top:147.2px;width:1px;height:1.6px;background:#179fff;opacity:.42;"></div>
<div style="left:1819px;top:147.2px;width:1px;height:1.6px;background:#d4d4d4;opacity:.42;"></div>
<div style="left:1798px;top:149.2px;width:11px;height:1.6px;background:#9cdcfe;opacity:.42;"></div>
<div style="left:1809px;top:149.2px;width:1px;height:1.6px;background:#d4d4d4;opacity:.42;"></div>
<div style="left:1811px;top:149.2px;width:1px;height:1.6px;background:#179fff;opacity:.42;"></div>
<div style="left:1812px;top:149.2px;width:13px;height:1.6px;background:#4ec9b0;opacity:.42;"></div>
<div style="left:1825px;top:149.2px;width:1px;height:1.6px;background:#d4d4d4;opacity:.42;"></div>
<div style="left:1827px;top:149.2px;width:14px;height:1.6px;background:#4ec9b0;opacity:.42;"></div>
<div style="left:1841px;top:149.2px;width:1px;height:1.6px;background:#179fff;opacity:.42;"></div>
<div style="left:1842px;top:149.2px;width:1px;height:1.6px;background:#d4d4d4;opacity:.42;"></div>
<div style="left:1798px;top:151.2px;width:9px;height:1.6px;background:#9cdcfe;opacity:.42;"></div>
<div style="left:1807px;top:151.2px;width:1px;height:1.6px;background:#d4d4d4;opacity:.42;"></div>
<div style="left:1809px;top:151.2px;width:1px;height:1.6px;background:#179fff;opacity:.42;"></div>
<div style="left:1810px;top:151.2px;width:10px;height:1.6px;background:#4ec9b0;opacity:.42;"></div>
<div style="left:1820px;top:151.2px;width:1px;height:1.6px;background:#179fff;opacity:.42;"></div>
<div style="left:1821px;top:151.2px;width:1px;height:1.6px;background:#d4d4d4;opacity:.42;"></div>
<div style="left:1796px;top:153.2px;width:1px;height:1.6px;background:#da70d6;opacity:.42;"></div>
<div style="left:1797px;top:153.2px;width:1px;height:1.6px;background:#ffd700;opacity:.42;"></div>
<div style="left:1796px;top:155.2px;width:6px;height:1.6px;background:#c586c0;opacity:.42;"></div>
<div style="left:1803px;top:155.2px;width:5px;height:1.6px;background:#569cd6;opacity:.42;"></div>
<div style="left:1809px;top:155.2px;width:9px;height:1.6px;background:#4ec9b0;opacity:.42;"></div>
<div style="left:1819px;top:155.2px;width:2px;height:1.6px;background:#ffd700;opacity:.42;"></div>
<div style="left:1907px;top:133px;width:1px;height:268px;background:#444444;"></div>
<div style="left:1907px;top:133px;width:21px;height:1px;background:#333333;"></div>
<div style="left:1908px;top:230px;width:20px;height:2px;background:#a0a0a0;"></div>
<!-- p_panel -->
<div style="left:496px;top:401px;width:1432px;height:1px;background:#454545;"></div>
<div class="t" style="left:524.5px;top:418.9px;height:19.01px;line-height:19.01px;font-size:15.84px;color:#e7e7e7;transform:scaleX(1.0337);">终端</div>
<div style="left:522px;top:445.8px;width:37px;height:1.1px;background:#e7e7e7;"></div>
<div class="t" style="left:591.0px;top:418.9px;height:19.01px;line-height:19.01px;font-size:15.84px;color:#969696;transform:scaleX(0.8739);">GITLENS</div>
<div class="t" style="left:684.6px;top:418.9px;height:19.01px;line-height:19.01px;font-size:15.84px;color:#969696;transform:scaleX(0.8398);">JUPYTER</div>
<div class="t" style="left:778.25px;top:418.9px;height:19.01px;line-height:19.01px;font-size:15.84px;color:#969696;transform:scaleX(1.0542);">问题</div>
<div class="t" style="left:845.4px;top:418.9px;height:19.01px;line-height:19.01px;font-size:15.84px;color:#969696;transform:scaleX(1.0413);">输出</div>
<div class="t" style="left:912.0px;top:418.9px;height:19.01px;line-height:19.01px;font-size:15.84px;color:#969696;transform:scaleX(1.0113);">调试控制台</div>
<svg style="left:1801.18px;top:415.18px;" width="23.04" height="23.04" viewBox="0 0 16 16"><path d="M14 7v1H8v6H7V8H1V7h6V1h1v6h6z" fill="#c5c5c5"/></svg>
<svg style="left:1827.0px;top:419.5px;" width="17" height="17" viewBox="0 0 16 16"><path d="M7.976 10.072l4.357-4.357.620.618L8.284 11h-.618L3 6.333l.619-.618 4.357 4.357z" fill="#c5c5c5"/></svg>
<svg style="left:1856.98px;top:414.98px;" width="23.04" height="23.04" viewBox="0 0 16 16"><path d="M8.024 5.928l-4.357 4.357-.620-.618L7.716 5h.618L13 9.667l-.619.618-4.357-4.357z" fill="#c5c5c5"/></svg>
<svg style="left:1888.48px;top:415.18px;" width="23.04" height="23.04" viewBox="0 0 16 16"><path d="M8 8.707l3.646 3.647.708-.707L8.707 8l3.647-3.646-.707-.708L8 7.293 4.354 3.646l-.707.708L7.293 8l-3.646 3.646.707.708L8 8.707z" fill="#c5c5c5"/></svg>
<div class="t m" style="left:525.0px;top:459.32px;height:22.16px;line-height:22.16px;font-size:18.47px;color:#cccccc;letter-spacing:-0.074px;">Windows PowerShell</div>
<div class="t m" style="left:526.2px;top:482.55px;height:23.36px;line-height:23.36px;font-size:19.47px;color:#cccccc;letter-spacing:2.547px;">版权所有（</div>
<div class="t m" style="left:635.0px;top:484.35px;height:22.16px;line-height:22.16px;font-size:18.47px;color:#cccccc;letter-spacing:-0.074px;">C</div>
<div class="t m" style="left:647.2px;top:482.55px;height:23.36px;line-height:23.36px;font-size:19.47px;color:#cccccc;letter-spacing:2.547px;">）</div>
<div class="t m" style="left:668.0px;top:484.35px;height:22.16px;line-height:22.16px;font-size:18.47px;color:#cccccc;letter-spacing:-0.074px;"> Microsoft Corporation</div>
<div class="t m" style="left:911.2px;top:482.55px;height:23.36px;line-height:23.36px;font-size:19.47px;color:#cccccc;letter-spacing:2.547px;">。保留所有权利。</div>
<div class="t m" style="left:526.2px;top:532.61px;height:23.36px;line-height:23.36px;font-size:19.47px;color:#cccccc;letter-spacing:2.547px;">安装最新的</div>
<div class="t m" style="left:635.0px;top:534.41px;height:22.16px;line-height:22.16px;font-size:18.47px;color:#cccccc;letter-spacing:-0.074px;"> PowerShell</div>
<div class="t m" style="left:757.2px;top:532.61px;height:23.36px;line-height:23.36px;font-size:19.47px;color:#cccccc;letter-spacing:2.547px;">，了解新功能和改进！</div>
<div class="t m" style="left:976.0px;top:534.41px;height:22.16px;line-height:22.16px;font-size:18.47px;color:#cccccc;letter-spacing:-0.074px;">https:</div>
<div class="t m" style="left:1042.0px;top:534.41px;height:22.16px;line-height:22.16px;font-size:18.47px;color:#cccccc;letter-spacing:-0.074px;">//aka.ms/PSWindows</div>
<div class="t m" style="left:525.0px;top:584.47px;height:22.16px;line-height:22.16px;font-size:18.47px;color:#cccccc;letter-spacing:-0.074px;">PS C:\Users\TR\Desktop\demo&gt; </div>
<div class="t m" style="left:844.0px;top:584.47px;height:22.16px;line-height:22.16px;font-size:18.47px;color:#e5e510;letter-spacing:-0.074px;">nest</div>
<div class="t m" style="left:888.0px;top:584.47px;height:22.16px;line-height:22.16px;font-size:18.47px;color:#cccccc;letter-spacing:-0.074px;"> g co user</div>
<div class="t m" style="left:525.0px;top:609.5px;height:22.16px;line-height:22.16px;font-size:18.47px;color:#0dbc79;letter-spacing:-0.074px;">CREATE</div>
<div class="t m" style="left:591.0px;top:609.5px;height:22.16px;line-height:22.16px;font-size:18.47px;color:#cccccc;letter-spacing:-0.074px;"> src/user/user.controller.spec.ts (478 bytes)</div>
<div class="t m" style="left:525.0px;top:634.53px;height:22.16px;line-height:22.16px;font-size:18.47px;color:#0dbc79;letter-spacing:-0.074px;">CREATE</div>
<div class="t m" style="left:591.0px;top:634.53px;height:22.16px;line-height:22.16px;font-size:18.47px;color:#cccccc;letter-spacing:-0.074px;"> src/user/user.controller.ts (97 bytes)</div>
<div class="t m" style="left:525.0px;top:659.56px;height:22.16px;line-height:22.16px;font-size:18.47px;color:#11a8cd;letter-spacing:-0.074px;">UPDATE</div>
<div class="t m" style="left:591.0px;top:659.56px;height:22.16px;line-height:22.16px;font-size:18.47px;color:#cccccc;letter-spacing:-0.074px;"> src/app.module.ts (322 bytes)</div>
<div class="t m" style="left:525.0px;top:684.59px;height:22.16px;line-height:22.16px;font-size:18.47px;color:#cccccc;letter-spacing:-0.074px;">PS C:\Users\TR\Desktop\demo&gt; </div>
<div class="t m" style="left:844.0px;top:684.59px;height:22.16px;line-height:22.16px;font-size:18.47px;color:#e5e510;letter-spacing:-0.074px;">nest</div>
<div class="t m" style="left:888.0px;top:684.59px;height:22.16px;line-height:22.16px;font-size:18.47px;color:#cccccc;letter-spacing:-0.074px;"> g mo user</div>
<div class="t m" style="left:525.0px;top:709.62px;height:22.16px;line-height:22.16px;font-size:18.47px;color:#0dbc79;letter-spacing:-0.074px;">CREATE</div>
<div class="t m" style="left:591.0px;top:709.62px;height:22.16px;line-height:22.16px;font-size:18.47px;color:#cccccc;letter-spacing:-0.074px;"> src/user/user.module.ts (81 bytes)</div>
<div class="t m" style="left:525.0px;top:734.65px;height:22.16px;line-height:22.16px;font-size:18.47px;color:#11a8cd;letter-spacing:-0.074px;">UPDATE</div>
<div class="t m" style="left:591.0px;top:734.65px;height:22.16px;line-height:22.16px;font-size:18.47px;color:#cccccc;letter-spacing:-0.074px;"> src/app.module.ts (381 bytes)</div>
<div class="t m" style="left:525.0px;top:759.68px;height:22.16px;line-height:22.16px;font-size:18.47px;color:#cccccc;letter-spacing:-0.074px;">PS C:\Users\TR\Desktop\demo&gt; </div>
<div style="left:844.3px;top:754.3px;width:11px;height:24.5px;background:#cccccc;"></div>
<div style="left:1791px;top:451px;width:1px;height:556px;background:#454545;"></div>
<div style="left:1792px;top:483px;width:136px;height:32px;background:#37373d;"></div>
<svg style="left:1806.5px;top:456.5px;" width="23" height="23" viewBox="0 0 16 16"><path d="M2.200 1.500l2.300 1.200 1 2L13.800 13a1 1 0 0 1-1.400 1.400L4 6.200l-2-1z" fill="none" stroke="#cccccc" stroke-width="1.100" stroke-linejoin="round"/><path d="M13.900 2.200l-2.300 2.300.600 1.300 1.300.600 2.100-2.100a3.300 3.300 0 0 1-4.300 3.800L3.800 14.600a1.400 1.400 0 0 1-2-2l6.500-7.500a3.300 3.300 0 0 1 3.900-4.200z" fill="none" stroke="#cccccc" stroke-width="1.100" stroke-linejoin="round" transform="translate(.3 -.2) scale(.95)"/></svg>
<div class="t" style="left:1834.9px;top:457.77px;height:22.46px;line-height:22.46px;font-size:18.72px;color:#cccccc;transform:scaleX(0.9744);">star...</div>
<svg style="left:1895px;top:457px;" width="20" height="22" viewBox="0 0 20 22"><path d="M8.500 1.500A9.500 9.500 0 0 1 8.500 20.500" fill="none" stroke="#9a9a9a" stroke-width="1.600"/></svg>
<svg style="left:1806.5px;top:488px;" width="23" height="23" viewBox="0 0 16 16"><rect x="1" y="1.500" width="14" height="13" rx="1" fill="none" stroke="#cccccc" stroke-width="1.050"/><path d="M5.800 5.200L9 8l-3.200 2.800" fill="none" stroke="#cccccc" stroke-width="1.050"/></svg>
<div class="t" style="left:1834.52px;top:489.27px;height:22.46px;line-height:22.46px;font-size:18.72px;color:#cccccc;transform:scaleX(0.9799);">powers...</div>
<!-- p_status -->
<div style="left:8px;top:1007px;width:1920px;height:32px;background:#007acc;"></div>
<svg style="left:28px;top:1011.2px;" width="24" height="24" viewBox="0 0 16 16"><path d="M4.500 5.200v5.600M11.500 7c0 2.300-2 2.700-4 2.900-1.800.2-3 .7-3 1.400" fill="none" stroke="#ffffff" stroke-width="1.150"/><circle cx="4.500" cy="3.300" r="1.850" fill="none" stroke="#ffffff" stroke-width="1.150"/><circle cx="11.500" cy="5.100" r="1.850" fill="none" stroke="#ffffff" stroke-width="1.150"/><circle cx="4.500" cy="12.700" r="1.850" fill="none" stroke="#ffffff" stroke-width="1.150"/></svg>
<div class="t" style="left:54.0px;top:1013.93px;height:20.74px;line-height:20.74px;font-size:17.28px;color:#ffffff;transform:scaleX(0.9972);">master*</div>
<svg style="left:135.5px;top:1012.5px;" width="22" height="22" viewBox="0 0 16 16"><path d="M5.500 12H4a3 3 0 0 1-.400-5.970A4.500 4.500 0 0 1 12.400 6 3 3 0 0 1 12 12h-1.500" fill="none" stroke="#ffffff" stroke-width="1.100"/><path d="M8 14V8M5.800 10L8 7.800 10.200 10" fill="none" stroke="#ffffff" stroke-width="1.100"/></svg>
<svg style="left:179.5px;top:1013px;" width="21" height="21" viewBox="0 0 16 16"><circle cx="8" cy="8" r="6.500" fill="none" stroke="#ffffff" stroke-width="1.100"/><path d="M5.500 5.500l5 5M10.500 5.500l-5 5" stroke="#ffffff" stroke-width="1.100"/></svg>
<div class="t" style="left:204.9px;top:1013.93px;height:20.74px;line-height:20.74px;font-size:17.28px;color:#ffffff;transform:scaleX(1.0111);">0</div>
<svg style="left:218.5px;top:1013px;" width="21" height="21" viewBox="0 0 16 16"><path d="M8 2L14.500 13.500H1.500z" fill="none" stroke="#ffffff" stroke-width="1.100" stroke-linejoin="round"/><path d="M8 6.500v3.500" stroke="#ffffff" stroke-width="1.100"/><circle cx="8" cy="11.700" r=".7" fill="#ffffff"/></svg>
<div class="t" style="left:243.8px;top:1013.93px;height:20.74px;line-height:20.74px;font-size:17.28px;color:#ffffff;transform:scaleX(1.0111);">0</div>
<svg style="left:276px;top:1012.5px;" width="21" height="21" viewBox="0 0 16 16"><path d="M2.200 1.500l2.300 1.200 1 2L13.800 13a1 1 0 0 1-1.400 1.400L4 6.200l-2-1z" fill="none" stroke="#ffffff" stroke-width="1.100" stroke-linejoin="round"/><path d="M13.900 2.200l-2.300 2.300.600 1.300 1.300.600 2.100-2.100a3.300 3.300 0 0 1-4.300 3.800L3.800 14.600a1.400 1.400 0 0 1-2-2l6.500-7.500a3.300 3.300 0 0 1 3.900-4.200z" fill="none" stroke="#ffffff" stroke-width="1.100" stroke-linejoin="round" transform="translate(.3 -.2) scale(.95)"/></svg>
<div class="t" style="left:301.1px;top:1013.93px;height:20.74px;line-height:20.74px;font-size:17.28px;color:#ffffff;transform:scaleX(0.9);">1</div>
<div class="t" style="left:1228.3px;top:1013.93px;height:20.74px;line-height:20.74px;font-size:17.28px;color:#ffffff;transform:scaleX(0.9941);">行 9，列 46 (已选择14)</div>
<div class="t" style="left:1425.59px;top:1013.93px;height:20.74px;line-height:20.74px;font-size:17.28px;color:#ffffff;transform:scaleX(1.0149);">空格: 2</div>
<div class="t" style="left:1501.96px;top:1013.93px;height:20.74px;line-height:20.74px;font-size:17.28px;color:#ffffff;transform:scaleX(0.9406);">UTF-8</div>
<div class="t" style="left:1570.31px;top:1013.93px;height:20.74px;line-height:20.74px;font-size:17.28px;color:#ffffff;transform:scaleX(0.8924);">LF</div>
<div class="t" style="left:1609.7px;top:1012.93px;height:20.74px;line-height:20.74px;font-size:17.28px;color:#ffffff;letter-spacing:5.234px;">{}</div>
<div class="t" style="left:1637.3px;top:1013.93px;height:20.74px;line-height:20.74px;font-size:17.28px;color:#ffffff;transform:scaleX(0.9564);">TypeScript</div>
<!-- p_overlay -->
<div style="left:115.9px;top:418px;width:282.7px;height:71.8px;border:3.1px solid #e8383d;"></div>
<div style="left:98.8px;top:490.2px;width:185.5px;height:31.9px;border:3.1px solid #e8383d;"></div>
<div style="left:823px;top:531.5px;width:294px;height:118.0px;border:3.1px solid #e8383d;"></div>
<div style="left:811.5px;top:674px;width:217.0px;height:76.5px;border:3.1px solid #e8383d;"></div>
<div style="left:1817px;top:763px;width:40px;height:23px;background:#ffffff;border:1px solid #adadad;"></div>
<div class="t" style="left:1825.1px;top:767.3px;height:15.0px;line-height:15.0px;font-size:12.5px;color:#4a4a4a;font-weight:300;transform:scaleX(0.9878);">关闭</div>
<div style="left:1919px;top:883px;width:12px;height:57px;background:#2b3140;border-radius:4px;border:1px solid #3b4354;"></div>
<div style="left:1923px;top:890px;width:5px;height:1px;background:#4a5060;"></div>
<div style="left:1923px;top:892px;width:5px;height:1px;background:#4a5060;"></div>
<div style="left:1923px;top:894px;width:5px;height:1px;background:#4a5060;"></div>
<div style="left:1923px;top:896px;width:5px;height:1px;background:#4a5060;"></div>
<div style="left:1923px;top:898px;width:5px;height:1px;background:#4a5060;"></div>
<div style="left:1923px;top:900px;width:5px;height:1px;background:#4a5060;"></div>
<div style="left:1923px;top:902px;width:5px;height:1px;background:#4a5060;"></div>
<div style="left:1923px;top:904px;width:5px;height:1px;background:#4a5060;"></div>
<div style="left:1923px;top:906px;width:5px;height:1px;background:#4a5060;"></div>
<div style="left:1923px;top:908px;width:5px;height:1px;background:#4a5060;"></div>
<div style="left:1923px;top:910px;width:5px;height:1px;background:#c8c040;"></div>
<div style="left:1923px;top:912px;width:5px;height:1px;background:#c8c040;"></div>
<div style="left:1923px;top:914px;width:5px;height:1px;background:#c8c040;"></div>
<div style="left:1923px;top:916px;width:5px;height:1px;background:#c8c040;"></div>
<div style="left:1923px;top:918px;width:5px;height:1px;background:#8fc060;"></div>
<div style="left:1923px;top:920px;width:5px;height:1px;background:#8fc060;"></div>
<div style="left:1923px;top:922px;width:5px;height:1px;background:#8fc060;"></div>
<div style="left:1923px;top:924px;width:5px;height:1px;background:#8fc060;"></div>
<div style="left:1923px;top:926px;width:5px;height:1px;background:#40c0a0;"></div>
<div style="left:1923px;top:928px;width:5px;height:1px;background:#40c0a0;"></div>
<div style="left:1923px;top:930px;width:5px;height:1px;background:#40c0a0;"></div>
<div style="left:1923px;top:932px;width:5px;height:1px;background:#40c0a0;"></div>
<svg style="left:1741px;top:1013.5px;" width="16" height="16" viewBox="0 0 16 16"><circle cx="8" cy="8" r="6.500" fill="none" stroke="#ffffff" stroke-width="1.200"/></svg>
<div style="left:1799.5px;top:1015.5px;width:1.5px;height:3px;background:#ffffff;"></div>
<div style="left:1848.5px;top:1014px;width:13px;height:12px;border:1.400px solid #ffffff;border-radius:1px;"></div>
<svg style="left:1888px;top:1013.5px;" width="16" height="16" viewBox="0 0 16 16"><circle cx="8" cy="8" r="6" fill="none" stroke="#ffffff" stroke-width="1.200"/></svg>
<div style="left:1722px;top:979px;width:128px;height:29.3px;background:#ffffff;border:1px solid #c8c8c8;"></div>
<svg style="left:1730.5px;top:1007.5px;" width="10" height="7" viewBox="0 0 10 7"><path d="M0 0h10L5 6z" fill="#ffffff"/></svg>
<div class="t" style="left:1732.0px;top:986.22px;height:15.36px;line-height:15.36px;font-size:12.8px;color:#222222;font-weight:300;transform:scaleX(0.9361);">个性设置，点我看看</div>
<div style="left:1744px;top:1017.8px;width:184px;height:21.5px;background:#ffffff;"></div>
<svg style="left:1720px;top:1012px;" width="32" height="30" viewBox="0 0 32 30"><path d="M4.500 6.800L21.500 2.200c1.600-.4 2.800.3 3.200 1.900l4.300 17.500c.4 1.600-.3 2.800-1.900 3.200L10.500 29c-1.600.4-2.800-.3-3.200-1.900L2.600 10c-.4-1.600.3-2.800 1.900-3.200z" fill="#f4511e"/><path d="M22.500 8.200c-4-1.600-10.500-.8-13.300 1.800-2.200 2.100-.6 4.300 2.600 4.800 3.400.5 7.800-.2 8.200 1.600.3 1.500-3.500 2.600-7 2.700-2.100 0-4.200-.4-5.600-1.200l.8 3.300c4.300 1.800 11.800 1 14.800-1.900 2.300-2.300.7-4.700-3-5.200-3.300-.4-7.300.2-7.700-1.400-.3-1.400 3.200-2.400 6.300-2.400 1.700 0 3.400.3 4.600.9z" fill="#ffffff"/></svg>
<div class="t" style="left:1755.8px;top:1020.8px;height:17.4px;line-height:17.4px;font-size:14.5px;color:#1a6fd0;font-weight:bold;transform:scaleX(0.9467);">英</div>
<div style="left:1780px;top:1024.3px;width:3.6px;height:3.6px;background:#1a6fd0;border-radius:2px;"></div>
<svg style="left:1784.5px;top:1027px;" width="5" height="7" viewBox="0 0 5 7"><path d="M1.200 0h3.300c.3 3-1 5.500-3.800 6.800l-.5-.9c1.600-.9 2.300-2 2.200-3.300H1.200z" fill="#1a6fd0"/></svg>
<svg style="left:1799px;top:1021.5px;" width="16" height="16.5" viewBox="0 0 16 16.500"><circle cx="8" cy="8.200" r="7" fill="none" stroke="#1a6fd0" stroke-width="1.500"/><path d="M5.900 4.500v3.700M10.100 4.500v3.700" stroke="#1a6fd0" stroke-width="1.500"/><path d="M4.300 10.200c1.800 2.500 5.600 2.500 7.400 0" fill="none" stroke="#1a6fd0" stroke-width="1.400"/></svg>
<svg style="left:1823px;top:1021px;" width="12" height="17.5" viewBox="0 0 12 17.500"><rect x="3.200" y="0" width="5.600" height="9.500" rx="2.800" fill="#1a6fd0"/><path d="M.8 7.500c0 6.500 10.400 6.500 10.400 0M6 12.500V16M2.800 16.300h6.400" fill="none" stroke="#1a6fd0" stroke-width="1.500"/></svg>
<svg style="left:1843.4px;top:1023px;" width="15" height="11.5" viewBox="0 0 15 11.500"><rect x="0" y="0" width="15" height="11.500" rx="1.200" fill="#1a6fd0"/><path d="M2.500 2.800h1.500M5.500 2.800h1.500M8.500 2.800h1.500M11.500 2.800h1.200M2.500 5.600h1.500M5.500 5.600h1.500M8.500 5.600h1.500M11.500 5.600h1.200M3.500 8.600h8" stroke="#ffffff" stroke-width="1.300"/></svg>
<svg style="left:1868px;top:1021.5px;" width="16" height="16" viewBox="0 0 16 16"><circle cx="6.500" cy="4" r="3.500" fill="#1a6fd0"/><path d="M0 15.500c0-8.500 13-8.500 13 0z" fill="#1a6fd0"/><circle cx="12" cy="12.500" r="2.800" fill="#1a6fd0" stroke="#ffffff" stroke-width="1"/></svg>
<svg style="left:1888px;top:1022px;" width="14.5" height="14.5" viewBox="0 0 19 19"><path d="M6 .5c1.500 2 5.500 2 7 0L18.500 4 16 8l-2-1v11.500H5V7L3 8 .5 4z" fill="#1a6fd0"/></svg>
<svg style="left:1910px;top:1023.2px;" width="13.2" height="13.2" viewBox="0 0 16 16"><rect x="0" y="0" width="7" height="7" fill="#1a6fd0"/><rect x="9" y="0" width="7" height="7" fill="none" stroke="#1a6fd0" stroke-width="2"/><rect x="0" y="9" width="7" height="7" fill="#1a6fd0"/><rect x="9" y="9" width="7" height="7" fill="#1a6fd0"/></svg>
<div class="t" style="left:1821.4px;top:1025.32px;height:15.36px;line-height:15.36px;font-size:12.8px;color:#7d7d7d;transform:scaleX(1.0022);opacity:.9;text-shadow:0 0 1px #fff;">CSDN @小周zs</div>
</body></html>
